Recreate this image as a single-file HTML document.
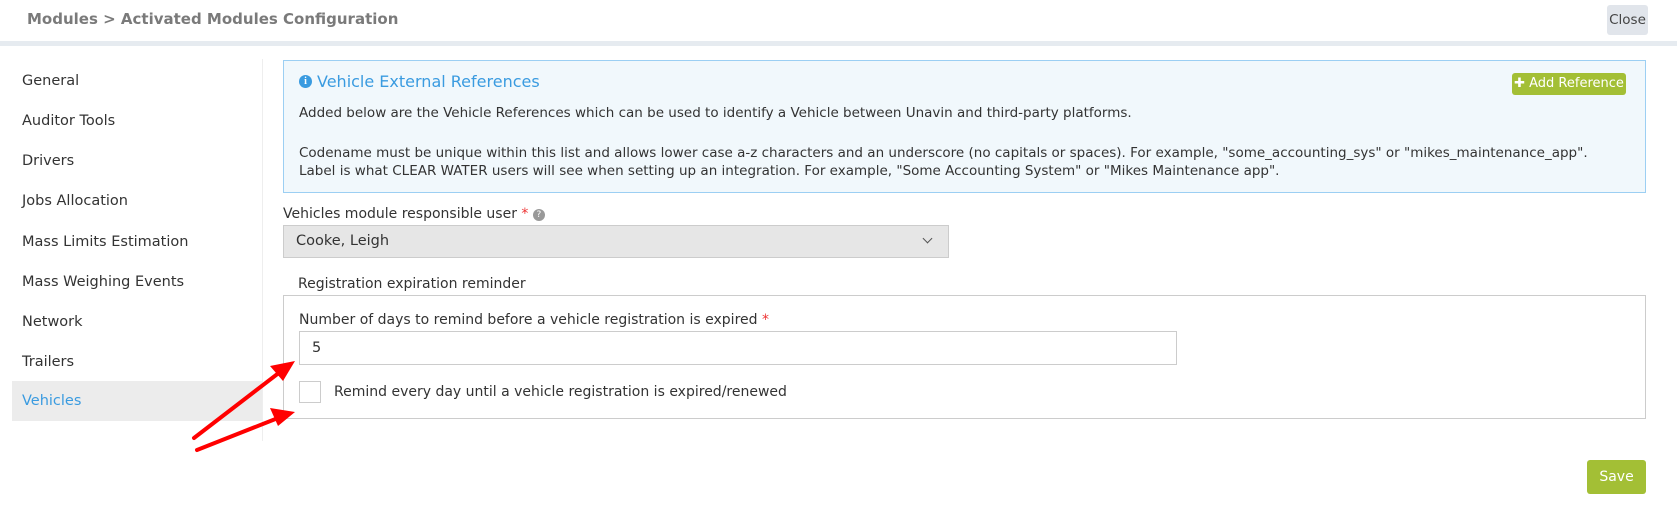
<!DOCTYPE html>
<html><head><style>
*{box-sizing:border-box;margin:0;padding:0}
body{width:1677px;height:532px;background:#fff;font-family:"DejaVu Sans","Liberation Sans",sans-serif;color:#333;position:relative;overflow:hidden;font-size:14px}
.a{position:absolute;white-space:nowrap}
.nav{left:22px;font-size:14.5px;color:#333}
</style></head><body>
<div class="a" style="left:27px;top:10px;font-size:15px;font-weight:bold;color:#7a7a7a">Modules &gt; Activated Modules Configuration</div>
<div class="a" style="left:1607px;top:5px;width:41px;height:30px;background:#e1e5eb;border-radius:3px;font-size:13.5px;color:#444;line-height:30px;text-align:center">Close</div>
<div class="a" style="left:0;top:41px;width:1677px;height:5px;background:#e6ebf0"></div>
<div class="a" style="left:262px;top:59px;width:1px;height:382px;background:#eee"></div>
<div class="a" style="left:12px;top:381px;width:250px;height:40px;background:#ececec"></div>
<div class="a nav" style="top:73px">General</div>
<div class="a nav" style="top:113px">Auditor Tools</div>
<div class="a nav" style="top:153px">Drivers</div>
<div class="a nav" style="top:193px">Jobs Allocation</div>
<div class="a nav" style="top:234px">Mass Limits Estimation</div>
<div class="a nav" style="top:274px">Mass Weighing Events</div>
<div class="a nav" style="top:314px">Network</div>
<div class="a nav" style="top:354px">Trailers</div>
<div class="a nav" style="top:393px;color:#3a9be0">Vehicles</div>
<div class="a" style="left:283px;top:60px;width:1363px;height:133px;background:#f1f8fc;border:1px solid #9ccff3"></div>
<div class="a" style="left:299px;top:75px;width:13px;height:13px;border-radius:50%;background:#3a9be0;color:#fff;font-size:10px;font-weight:bold;text-align:center;line-height:13px;font-family:'Liberation Serif',serif">i</div>
<div class="a" style="left:317px;top:72px;font-size:16px;color:#3a9be0">Vehicle External References</div>
<div class="a" style="left:1512px;top:73px;width:114px;height:22px;background:#a3bf35;border-radius:3px;color:#fff;font-size:13px;line-height:22px;text-align:center">✚ Add Reference</div>
<div class="a" style="left:299px;top:105px;font-size:13.5px">Added below are the Vehicle References which can be used to identify a Vehicle between Unavin and third-party platforms.</div>
<div class="a" style="left:299px;top:145px;font-size:13.5px">Codename must be unique within this list and allows lower case a-z characters and an underscore (no capitals or spaces). For example, "some_accounting_sys" or "mikes_maintenance_app".</div>
<div class="a" style="left:299px;top:163px;font-size:13.5px">Label is what CLEAR WATER users will see when setting up an integration. For example, "Some Accounting System" or "Mikes Maintenance app".</div>
<div class="a" style="left:283px;top:206px;font-size:14px">Vehicles module responsible user <span style="color:#e33">*</span> <span style="display:inline-block;width:12px;height:12px;border-radius:50%;background:#999;color:#fff;font-size:9px;text-align:center;line-height:12px;vertical-align:1px">?</span></div>
<div class="a" style="left:283px;top:225px;width:666px;height:33px;background:#e6e6e6;border:1px solid #ccc"></div>
<div class="a" style="left:296px;top:233px;font-size:14.5px">Cooke, Leigh</div>
<div class="a" style="left:924px;top:235px;width:7px;height:7px;border-right:1.5px solid #555;border-bottom:1.5px solid #555;transform:rotate(45deg)"></div>
<div class="a" style="left:298px;top:276px;font-size:14px">Registration expiration reminder</div>
<div class="a" style="left:283px;top:295px;width:1363px;height:124px;border:1px solid #ccc"></div>
<div class="a" style="left:299px;top:312px;font-size:14px">Number of days to remind before a vehicle registration is expired <span style="color:#e33">*</span></div>
<div class="a" style="left:299px;top:331px;width:878px;height:34px;border:1px solid #ccc"></div>
<div class="a" style="left:312px;top:340px;font-size:14.5px">5</div>
<div class="a" style="left:299px;top:381px;width:22px;height:22px;border:1px solid #ccc"></div>
<div class="a" style="left:334px;top:384px;font-size:14px">Remind every day until a vehicle registration is expired/renewed</div>
<div class="a" style="left:1587px;top:460px;width:59px;height:34px;background:#a3bf35;border-radius:3px;color:#fff;font-size:14px;line-height:34px;text-align:center">Save</div>
<svg class="a" style="left:0;top:0" width="1677" height="532">
<g stroke="#f00" stroke-width="4" stroke-linecap="round"><line x1="194" y1="438" x2="280" y2="372"/><line x1="197" y1="450" x2="278" y2="418"/></g>
<polygon points="295,361 270,366 283,381" fill="#f00"/>
<polygon points="295,412 270,408 278,426" fill="#f00"/>
</svg>
</body></html>
